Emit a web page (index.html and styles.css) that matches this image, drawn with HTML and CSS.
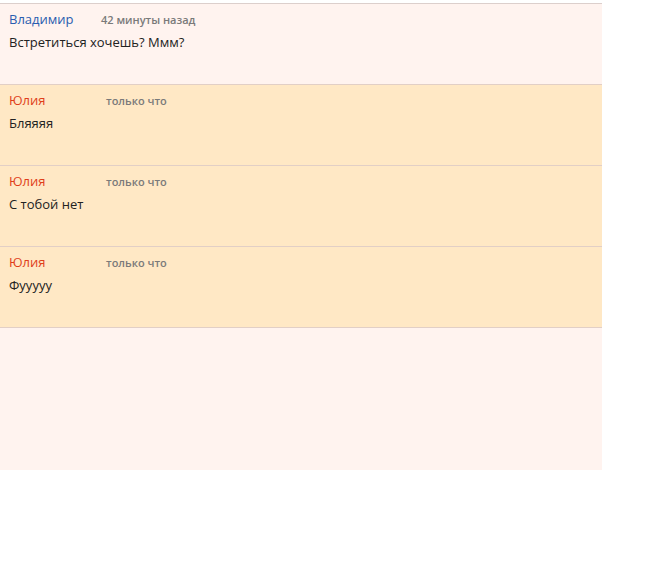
FILE: index.html
```html
<!DOCTYPE html>
<html lang="ru">
<head>
    <meta charset="UTF-8">
    <title>Сообщения</title>
    <link rel="stylesheet" href="styles.css">
</head>
<body>
    <div class="messages">
        <div class="msg">
            <div class="msg-head">
                <span class="name name-he">Владимир</span>
                <span class="time">42 минуты назад</span>
            </div>
            <p class="text">Встретиться хочешь? Ммм?</p>
        </div>
        <div class="msg msg-new">
            <div class="msg-head">
                <span class="name name-she">Юлия</span>
                <span class="time">только что</span>
            </div>
            <p class="text">Бляяяя</p>
        </div>
        <div class="msg msg-new">
            <div class="msg-head">
                <span class="name name-she">Юлия</span>
                <span class="time">только что</span>
            </div>
            <p class="text">С тобой нет</p>
        </div>
        <div class="msg msg-new">
            <div class="msg-head">
                <span class="name name-she">Юлия</span>
                <span class="time">только что</span>
            </div>
            <p class="text">Фууууу</p>
        </div>
    </div>
</body>
</html>
```

FILE: styles.css
```css
body {
    margin: 0;
    padding-top: 3px;
    font-family: "Open Sans", "Noto Sans", sans-serif;
    color: #222;
    background: #fff;
}
.messages {
    width: 602px;
    height: 466px;
    background: #fff3ef;
    border-top: 1px solid #dccfcc;
}
.msg {
    height: 81px;
    box-sizing: border-box;
    padding: 6px 9px;
    border-bottom: 1px solid #e2cfc6;
}
.msg-new {
    background: #ffe8c5;
}
.msg-head {
    display: flex;
    align-items: baseline;
    height: 18px;
}
.name {
    font-size: 13px;
}
.name-he {
    width: 92px;
    color: #2a5db0;
}
.name-she {
    width: 97px;
    color: #e03e1a;
}
.time {
    font-size: 11px;
    font-weight: 600;
    color: #7a7a7a;
}
.text {
    margin: 5px 0 0;
    font-size: 13px;
}
```
